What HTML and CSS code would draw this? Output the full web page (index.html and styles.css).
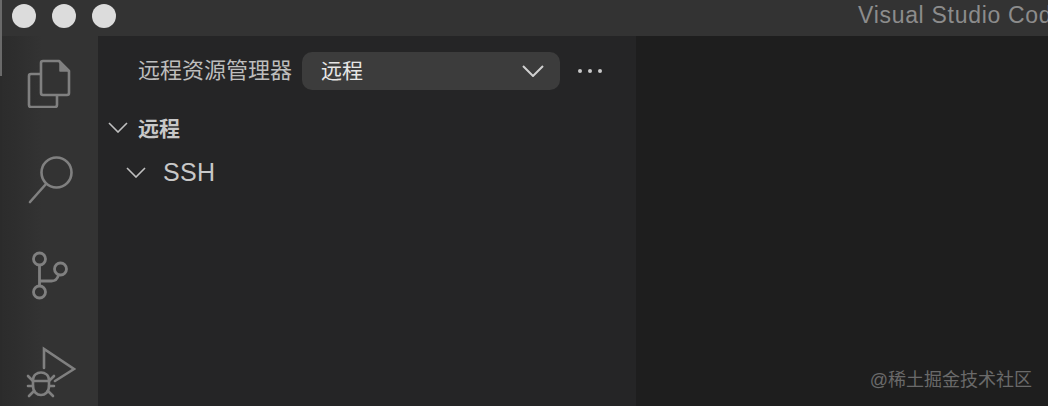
FILE: index.html
```html
<!DOCTYPE html>
<html lang="zh">
<head>
<meta charset="utf-8">
<title>Visual Studio Code</title>
<link rel="stylesheet" href="styles.css">
</head>
<body>
<div class="window">
  <header class="titlebar">
    <div class="lights"><span class="light"></span><span class="light"></span><span class="light"></span></div>
    <div class="title">Visual Studio Code</div>
  </header>
  <div class="main">
    <nav class="activity">
      <svg class="icon icon-files" width="46" height="50" viewBox="0 0 46 50" fill="none" stroke="#808080" stroke-width="2.6" stroke-linejoin="round">
        <path d="M17 3h16l10 10v22a2 2 0 0 1-2 2H17a2 2 0 0 1-2-2V5a2 2 0 0 1 2-2z"/>
        <path d="M34 4v9h8z" fill="#808080" stroke-width="1.500"/>
        <path d="M15 16H5a2 2 0 0 0-2 2v29a2 2 0 0 0 2 2h24a2 2 0 0 0 2-2V37"/>
      </svg>
      <svg class="icon icon-search" width="48" height="50" viewBox="0 0 48 50" fill="none" stroke="#808080" stroke-width="2.6" stroke-linecap="round">
        <circle cx="30.500" cy="17.500" r="15"/>
        <path d="M20 29L4 47"/>
      </svg>
      <svg class="icon icon-git" width="38" height="50" viewBox="0 0 38 50" fill="none" stroke="#808080" stroke-width="2.800">
        <circle cx="9.500" cy="9" r="6"/>
        <circle cx="30.500" cy="19" r="6"/>
        <circle cx="9.500" cy="42" r="6"/>
        <path d="M9.500 15v21"/>
        <path d="M9.500 31h12c4 0 6-2 7-6"/>
      </svg>
      <svg class="icon icon-debug" width="50" height="52" viewBox="0 0 50 52" fill="none" stroke="#808080" stroke-width="2.600" stroke-linecap="round">
        <path d="M18 22V3l30 20-19 12"/>
        <path d="M7 34c0-10 16-10 16 0v6c0 12-16 12-16 0z"/>
        <path d="M7 35h16M2 30l5 5M28 30l-5 5M2 40h5M23 40h5M3 50l5-5M27 50l-5-5"/>
      </svg>
    </nav>
    <aside class="sidebar">
      <div class="sidebar-head">
        <span class="sidebar-title">远程资源管理器</span>
        <div class="select">
          <span class="select-label">远程</span>
          <svg class="chev" width="22" height="12" viewBox="0 0 22 12" fill="none" stroke="#d0d0d0" stroke-width="2"><path d="M1 1l10 10L21 1"/></svg>
        </div>
        <div class="more"><i></i><i></i><i></i></div>
      </div>
      <div class="row row-group">
        <svg class="twist" width="20" height="11" viewBox="0 0 20 11" fill="none" stroke="#c0c0c0" stroke-width="1.600"><path d="M1 1l9 9 9-9"/></svg>
        <span class="group-label">远程</span>
      </div>
      <div class="row row-ssh">
        <svg class="twist" width="20" height="11" viewBox="0 0 20 11" fill="none" stroke="#c0c0c0" stroke-width="1.600"><path d="M1 1l9 9 9-9"/></svg>
        <span class="ssh-label">SSH</span>
      </div>
    </aside>
    <section class="editor">
      <div class="watermark">@稀土掘金技术社区</div>
    </section>
  </div>
</div>
</body>
</html>
```

FILE: styles.css
```css
html, body {
  margin: 0;
  padding: 0;
  background: #1e1e1e;
}
.window {
  width: 1048px;
  height: 406px;
  overflow: hidden;
  display: flex;
  flex-direction: column;
  font-family: "Liberation Sans", "Noto Sans CJK SC", sans-serif;
  border-left: 2px solid #2b2b2b;
  border-image: linear-gradient(#6a6a6a 0, #6a6a6a 77px, #2b2b2b 77px) 1;
  box-sizing: border-box;
}
.titlebar {
  height: 36px;
  flex: none;
  background: #333333;
  display: flex;
  align-items: flex-start;
  justify-content: flex-end;
  overflow: hidden;
}
.lights {
  display: flex;
  gap: 16px;
  margin: 4px auto 0 10px;
}
.light {
  width: 24px;
  height: 24px;
  border-radius: 50%;
  background: #dcdcdc;
}
.title {
  font-size: 23px;
  line-height: 30px;
  color: #8c8c8c;
  width: 190px;
  white-space: nowrap;
  letter-spacing: 0.7px;
}
.main {
  flex: 1;
  display: flex;
  min-height: 0;
}
.activity {
  width: 96px;
  flex: none;
  background: linear-gradient(90deg, #2c2c2c 0, #2e2e2e 14px, #333333 40px);
  display: flex;
  flex-direction: column;
  align-items: flex-start;
  overflow: hidden;
}
.icon { display: block; flex: none; }
.icon-files { margin: 22px 0 0 24px; }
.icon-search { margin: 47px 0 0 24px; }
.icon-git { margin: 45px 0 0 28px; }
.icon-debug { margin: 46px 0 0 24px; }
.sidebar {
  width: 538px;
  flex: none;
  background: #252526;
}
.sidebar-head {
  display: flex;
  align-items: center;
  height: 38px;
  margin-top: 16px;
  padding-left: 40px;
}
.sidebar-title {
  font-size: 22px;
  line-height: 38px;
  color: #bdbdbd;
  white-space: nowrap;
  width: 164px;
  flex: none;
}
.select {
  width: 258px;
  height: 38px;
  flex: none;
  box-sizing: border-box;
  padding: 0 16px 0 19px;
  background: #3c3c3c;
  border-radius: 10px;
  display: flex;
  align-items: center;
  justify-content: space-between;
}
.select-label {
  font-size: 21px;
  line-height: 38px;
  height: 38px;
  color: #e6e6e6;
}
.more {
  display: flex;
  gap: 6px;
  margin-left: 18px;
}
.more i {
  width: 4px;
  height: 4px;
  border-radius: 50%;
  background: #c8c8c8;
}
.row {
  display: flex;
  align-items: center;
  color: #c8c8c8;
}
.row-group {
  height: 44px;
  margin-top: 15px;
  padding-left: 10px;
}
.row-ssh {
  height: 44px;
  padding-left: 28px;
  padding-top: 1px;
}
.group-label {
  font-size: 21px;
  font-weight: 700;
  margin-left: 10px;
}
.ssh-label {
  font-size: 25px;
  letter-spacing: 0.3px;
  margin-left: 16px;
  padding-left: 1px;
}
.editor {
  flex: 1;
  background: #1e1e1e;
  position: relative;
}
.watermark {
  position: absolute;
  right: 16px;
  bottom: 14px;
  font-size: 18px;
  line-height: 24px;
  color: #6a6a6a;
  white-space: nowrap;
}
```
